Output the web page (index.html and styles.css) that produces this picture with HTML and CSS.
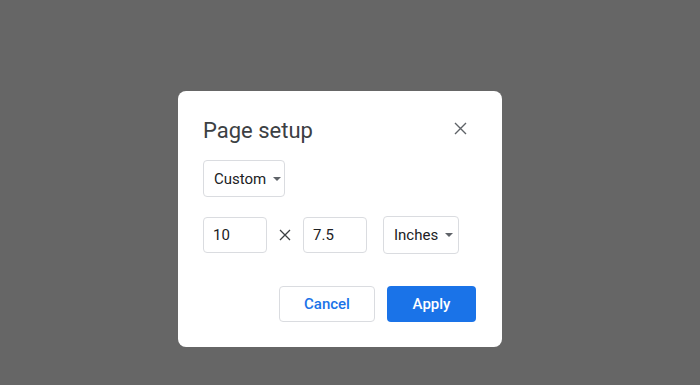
FILE: index.html
```html
<!DOCTYPE html>
<html lang="en">
<head>
    <meta charset="UTF-8">
    <title>Page setup</title>
    <link rel="stylesheet" href="styles.css">
</head>
<body>
    <div class="dialog">
        <div class="dialog-header">
            <h2>Page setup</h2>
            <button class="close-button" aria-label="Close">
                <svg width="13" height="13" viewBox="0 0 13 13"><path d="M1 1L12 12M12 1L1 12" stroke="#5f6368" stroke-width="1.4" fill="none"/></svg>
            </button>
        </div>

        <div class="select size-select">Custom <span class="caret"></span></div>

        <div class="size-row">
            <div class="text-input">10</div>
            <span class="times">
                <svg width="12" height="12" viewBox="0 0 12 12"><path d="M1 1L11 11M11 1L1 11" stroke="#3c4043" stroke-width="1.3" fill="none"/></svg>
            </span>
            <div class="text-input">7.5</div>
            <div class="select unit-select">Inches <span class="caret"></span></div>
        </div>

        <div class="actions">
            <button class="btn btn-cancel">Cancel</button>
            <button class="btn btn-apply">Apply</button>
        </div>
    </div>
</body>
</html>
```

FILE: styles.css
```css
body {
    margin: 0;
    background-color: #666666;
    font-family: Roboto, "Liberation Sans", Arial, sans-serif;
    color: #202124;
    height: 385px;
    overflow: hidden;
}

.dialog {
    width: 324px;
    height: 256px;
    box-sizing: border-box;
    margin: 91px 0 0 178px;
    background-color: #fff;
    border-radius: 8px;
    padding: 0 25px;
}

.dialog-header {
    display: flex;
    align-items: center;
    justify-content: space-between;
    height: 69px;
    padding-top: 6px;
    box-sizing: border-box;
}

.dialog-header h2 {
    margin: 0;
    padding-top: 3px;
    font-size: 22px;
    font-weight: 400;
    color: #3c4043;
}

.close-button {
    border: none;
    background: none;
    padding: 0;
    margin-right: 10px;
    width: 13px;
    height: 13px;
    display: flex;
    cursor: pointer;
}

.select {
    display: inline-flex;
    align-items: center;
    box-sizing: border-box;
    height: 37px;
    border: 1px solid #dadce0;
    border-radius: 4px;
    padding: 0 8px 0 10px;
    font-size: 15px;
    color: #202124;
}

.size-select {
    width: 82px;
}

.caret {
    display: inline-block;
    margin-left: 7px;
    border-left: 4px solid transparent;
    border-right: 4px solid transparent;
    border-top: 4px solid #5f6368;
}

.size-row {
    display: flex;
    align-items: center;
    margin-top: 19px;
}

.text-input {
    box-sizing: border-box;
    width: 64px;
    height: 36px;
    border: 1px solid #dadce0;
    border-radius: 4px;
    padding: 0 9px;
    display: flex;
    align-items: center;
    font-size: 15px;
}

.times {
    width: 36px;
    display: flex;
    justify-content: center;
}

.unit-select {
    margin-left: 16px;
    width: 76px;
    height: 38px;
}

.actions {
    display: flex;
    justify-content: flex-end;
    gap: 12px;
    margin-top: 32px;
    margin-right: 1px;
}

.btn {
    box-sizing: border-box;
    height: 36px;
    border-radius: 4px;
    font-family: inherit;
    font-size: 15px;
    font-weight: 500;
    cursor: pointer;
}

.btn-cancel {
    width: 96px;
    background: #fff;
    border: 1px solid #dadce0;
    color: #1a73e8;
}

.btn-apply {
    width: 89px;
    background: #1a73e8;
    border: none;
    color: #fff;
}
```
